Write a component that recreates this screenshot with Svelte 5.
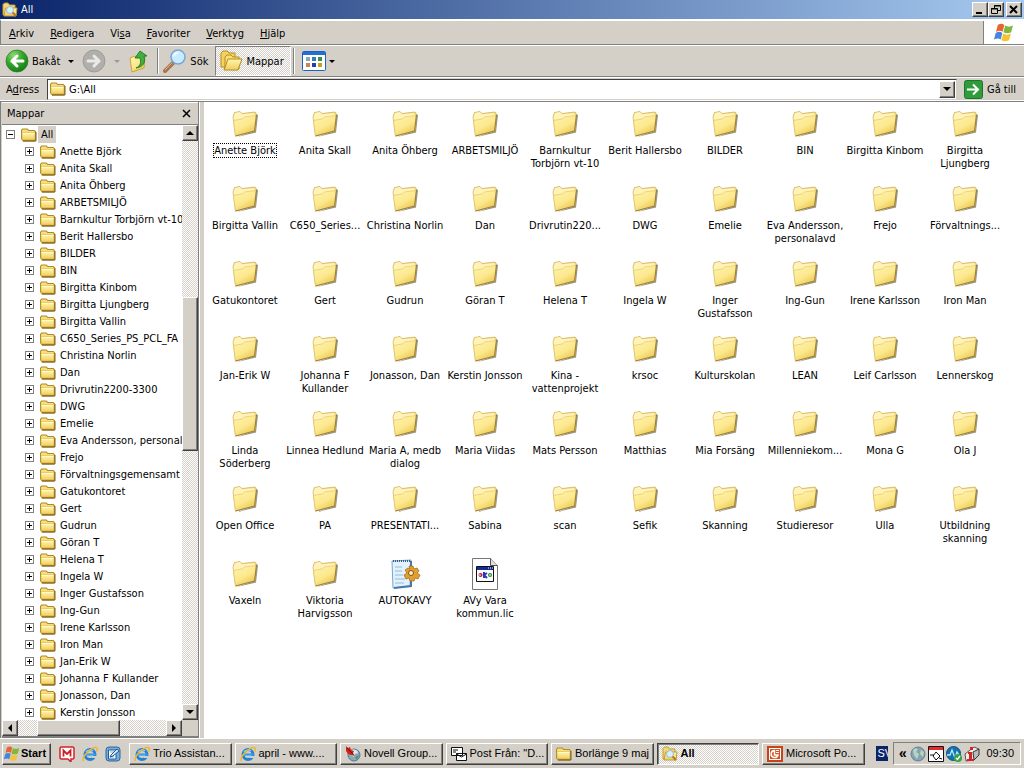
<script lang="ts">
	type Item = { label: string; kind?: string };
	type Task = { label: string; icon: string; active?: boolean };

	const menus = [
		['', 'A', 'rkiv'],
		['', 'R', 'edigera'],
		['Vi', 's', 'a'],
		['', 'F', 'avoriter'],
		['', 'V', 'erktyg'],
		['', 'H', 'jälp']
	];

	const tree = [
		'Anette Björk', 'Anita Skall', 'Anita Öhberg', 'ARBETSMILJÖ', 'Barnkultur Torbjörn vt-10',
		'Berit Hallersbo', 'BILDER', 'BIN', 'Birgitta Kinbom', 'Birgitta Ljungberg',
		'Birgitta Vallin', 'C650_Series_PS_PCL_FA', 'Christina Norlin', 'Dan', 'Drivrutin2200-3300',
		'DWG', 'Emelie', 'Eva Andersson, personalavd', 'Frejo', 'Förvaltningsgemensamt',
		'Gatukontoret', 'Gert', 'Gudrun', 'Göran T', 'Helena T', 'Ingela W', 'Inger Gustafsson',
		'Ing-Gun', 'Irene Karlsson', 'Iron Man', 'Jan-Erik W', 'Johanna F Kullander',
		'Jonasson, Dan', 'Kerstin Jonsson'
	];

	const folders = [
		'Anette Björk', 'Anita Skall', 'Anita Öhberg', 'ARBETSMILJÖ', 'Barnkultur\nTorbjörn vt-10',
		'Berit Hallersbo', 'BILDER', 'BIN', 'Birgitta Kinbom', 'Birgitta\nLjungberg',
		'Birgitta Vallin', 'C650_Series...', 'Christina Norlin', 'Dan', 'Drivrutin220...',
		'DWG', 'Emelie', 'Eva Andersson,\npersonalavd', 'Frejo', 'Förvaltnings...',
		'Gatukontoret', 'Gert', 'Gudrun', 'Göran T', 'Helena T',
		'Ingela W', 'Inger\nGustafsson', 'Ing-Gun', 'Irene Karlsson', 'Iron Man',
		'Jan-Erik W', 'Johanna F\nKullander', 'Jonasson, Dan', 'Kerstin Jonsson', 'Kina -\nvattenprojekt',
		'krsoc', 'Kulturskolan', 'LEAN', 'Leif Carlsson', 'Lennerskog',
		'Linda\nSöderberg', 'Linnea Hedlund', 'Maria A, medb\ndialog', 'Maria Viidas', 'Mats Persson',
		'Matthias', 'Mia Forsäng', 'Millenniekom...', 'Mona G', 'Ola J',
		'Open Office', 'PA', 'PRESENTATI...', 'Sabina', 'scan',
		'Sefik', 'Skanning', 'Studieresor', 'Ulla', 'Utbildning\nskanning',
		'Vaxeln', 'Viktoria\nHarvigsson'
	];

	const items: Item[] = [
		...folders.map((label) => ({ label })),
		{ label: 'AUTOKAVY', kind: 'batch' },
		{ label: 'AVy Vara\nkommun.lic', kind: 'license' }
	];

	const tasks: Task[] = [
		{ label: 'Trio Assistan...', icon: 'ie' },
		{ label: 'april - www....', icon: 'ie' },
		{ label: 'Novell Group...', icon: 'novell' },
		{ label: 'Post Från: "D...', icon: 'mail' },
		{ label: 'Borlänge 9 maj', icon: 'folder' },
		{ label: 'All', icon: 'explorer', active: true },
		{ label: 'Microsoft Po...', icon: 'powerpoint' }
	];

	let address = $state('G:\\All');
	let selected = $state(0);
</script>

{#snippet icon(name: string, size = 16)}
	<svg width={size} height={size} viewBox="0 0 16 16" aria-hidden="true">
		{#if name === 'folder'}
			<path d="M0 12V3l1.500-1.500h5L8 3h5.500L15 4.500V13l-1 1.500H2z" fill="#b08a28" />
			<path d="M1 12V3.500l1-1h4L7.500 4H13l1 1v8H2z" fill="#f8de7c" />
			<path d="M1 6h13v7H2l-1-1z" fill="url(#folderFront)" stroke="#d2a22e" stroke-width=".6" />
			<path d="M1.500 6.500h12" stroke="#fffbd0" />
			<path d="M15 5v9H2" fill="none" stroke="#7d6020" />
		{:else if name === 'explorer'}
			<path d="M1 13V2.500L2.500 1H6l1.500 2H13v10z" fill="#f4d778" stroke="#c39a35" />
			<path d="M2 14l1.500-8H15l-1 8z" fill="url(#folderFront)" stroke="#c3993a" />
			<circle cx="8" cy="8" r="3.500" fill="#d7f0fc" stroke="#9bbccd" />
			<path d="M10.500 10.500 14 14" stroke="#b87a28" stroke-width="2" />
		{:else if name === 'ie'}
			<circle cx="8" cy="8.500" r="5" fill="none" stroke="#2282d8" stroke-width="3" />
			<path d="M4 8.500h9.500" stroke="#3b9ce8" stroke-width="2.200" />
			<path d="M10 10h6v2h-6z" fill="#d4d0c8" />
			<path d="M4 6c1-2 5-3 7-1" fill="none" stroke="#8bd0fb" stroke-width="1.200" />
			<path d="M1.500 15C-1 11 11-1 15 2c1 1 0 2.500-.5 3.500" fill="none" stroke="#efb52c" stroke-width="1.500" />
		{:else if name === 'novell'}
			<circle cx="9" cy="9" r="6" fill="#87a9b8" stroke="#557788" />
			<path d="M5 5c3-3 8-1 8 2l-3 1-1 3-3-2z" fill="#d3ebf1" />
			<path d="m10 11 4-2-2 5z" fill="#5e8c67" />
			<path d="M1 0 3 2l2-1 1 3 3 1-1 2 2 3-4-1-3-1-2-3z" fill="#d32316" />
			<path d="m2 2 6 6" stroke="#731008" />
		{:else if name === 'mail'}
			<path d="M.5 1.500h11v8H.5zM5.500 7.500h10v7h-10z" fill="#fff" stroke="#111" />
			<path d="m5.500 8 5 3 5-3M2 4h5M2 6h3" fill="none" stroke="#111" />
		{:else if name === 'powerpoint'}
			<path d="M0 0h16v16H0z" fill="#c64518" />
			<path d="M2 2h12v12H2z" fill="#fff" />
			<path d="M3 3h10v10H3z" fill="#d45321" />
			<path d="M7.500 4.500A3.500 3.500 0 1 0 11 9H7.500z" fill="none" stroke="#fff" stroke-width="1.500" />
			<path d="M9 4.500h3M9 6.500h3" stroke="#fff" />
		{:else if name === 'flag'}
			<path d="M3.500 2.200c2-1.300 3.300-1 4.700 0L7 7C5.500 6 4 6 2.200 7.200z" fill="#e7632f" />
			<path d="M8.800 2.600c2 1.200 3.800 1 5.700 0L13.200 7.500c-2 1-3.700 1-5.600 0z" fill="#7fb83c" />
			<path d="M2 8c2-1.300 3.400-1 4.800 0l-1.200 4.700c-1.400-1-2.800-1-4.900 0z" fill="#4685dc" />
			<path d="M7.400 8.400c2 1.200 3.700 1 5.600 0l-1.300 4.800c-2 1-3.600 1-5.600 0z" fill="#f6c238" />
		{:else if name === 'messenger'}
			<path d="M2 1h12l1 1v10l-1 1h-2v3l-3-3H2l-1-1V2z" fill="#fff" stroke="#d52228" stroke-width="1.500" />
			<path d="M4.500 10.500v-6L8 8l3.500-3.500v6" fill="none" stroke="#c92027" stroke-width="1.800" />
		{:else if name === 'desktop'}
			<rect x="1" y="1" width="14" height="14" rx="3" fill="#72acd7" stroke="#2767a5" />
			<path d="M3.500 4h7.500v9H3.500z" fill="#fff" stroke="#225c99" />
			<path d="M5 6h4M5 11h4" stroke="#7eabd0" />
			<path d="m6 9 6-6 2 2-6 5-3 1z" fill="#d4ecf8" stroke="#21578c" />
		{:else if name === 'globe'}
			<circle cx="8" cy="8" r="7" fill="#85a3b5" stroke="#637f90" />
			<path d="M3 4c4-4 6 0 3 2l3 2-2 5-3-4zM11 4l3 2-1 5-3-3z" fill="#b9d6bd" />
		{:else if name === 'calendar'}
			<path d="M.5.500h15v15H.5z" fill="#fff" stroke="#111" />
			<path d="M1 1h14v3H1z" fill="#e72b2b" />
			<path d="m8 6 4 4-4 4-3-4zM2 9h4M11 12l3 1" fill="none" stroke="#111" />
		{:else if name === 'monitor'}
			<circle cx="7.500" cy="7.500" r="7" fill="#1473af" stroke="#115184" />
			<path d="M1 9h3l2-5 3 8 2-6 2 3" fill="none" stroke="#bcecfc" stroke-width="1.300" />
			<circle cx="12" cy="12" r="4" fill="#36a346" />
			<path d="m10 12 1.500 1.500L14 10" fill="none" stroke="#fff" stroke-width="1.300" />
		{:else if name === 'info'}
			<path d="m1 8 9-7 5 2-5 11-8 1z" fill="#eee" stroke="#555" />
			<path d="m9 6 6-3v6l-5 5z" fill="#bbb" stroke="#333" />
			<path d="M6 1h3v3H6zM4 6h4v7h2v2H3v-2h2V8H4z" fill="#d52424" />
		{/if}
	</svg>
{/snippet}

{#snippet bigIcon(kind = 'folder')}
	<svg width="32" height="32" viewBox="0 0 32 32" aria-hidden="true">
		{#if kind === 'folder'}
			<path d="M8 29 27 24.500 29 7l-2-1-2 17z" fill="#4f4a38" opacity=".6" />
			<path d="M4 9 5.500 4.500 11 3.500l2 2L26 4l1.500 2L26 23 6.500 28z" fill="#f0d47a" stroke="#cdae52" stroke-width=".7" />
			<path d="M4.500 9 6 5l4.800-1L13 6.300 25.500 5l.5 4L5 12.500z" fill="#fff3bb" />
			<path d="m4.500 12.500 9-1.700 2-1.800L27 7.500 25.500 23 6.500 28z" fill="url(#folderLarge)" stroke="#e3c05c" stroke-width=".6" />
			<path d="m6.500 28 19-5 2-16" fill="none" stroke="#8d7636" stroke-width=".9" />
		{:else if kind === 'batch'}
			<path d="m3 3 19-1-1 26-17 2z" fill="#e3f1fc" stroke="#7ba5cc" />
			<path d="M22 3v25L5 30" fill="none" stroke="#4578ad" stroke-width="2" />
			<path d="M4 3h17" stroke="#375e82" stroke-width="2" stroke-dasharray="1 1" />
			<path d="M6 9h7M6 13h7M6 17h8M6 21h10M6 25h9" stroke="#8dbbdc" />
			<path d="M20 8h4l1 3 3-1 2 3-2 2 3 2-2 4-3-1-1 3h-4l-1-3-3 1-2-4 3-2-2-3 3-2 2 1z" fill="#e1a02d" stroke="#9c6418" stroke-width=".7" />
			<circle cx="22" cy="15" r="2.500" fill="#fff0bd" stroke="#815019" />
		{:else}
			<path d="M3.500.500h18l7 7v24h-25z" fill="#fff" stroke="#777" />
			<path d="M21.500.500v7h7" fill="#ddd" stroke="#555" />
			<path d="M7.500 8.500h17v15h-17z" fill="#fff" stroke="#111" />
			<path d="M8 9h16v3H8z" fill="#162b97" />
			<path d="M19 10h1M21 10h1M23 10h1" stroke="#fff" />
			<circle cx="11.500" cy="17" r="2" fill="#bd1835" />
			<path d="M15 14v6m3-5-3 2 3 3" fill="none" stroke="#263bb3" stroke-width="2" />
			<circle cx="21" cy="17" r="2" fill="#248141" />
			<path d="M11 16v2M21 16v2" stroke="#fff" />
		{/if}
	</svg>
{/snippet}

<svg class="defs" width="0" height="0" aria-hidden="true">
	<defs>
		<linearGradient id="folderFront" x2="0" y2="1">
			<stop stop-color="#fff6ac" />
			<stop offset="1" stop-color="#f0cc5f" />
		</linearGradient>
		<linearGradient id="folderLarge" x2=".6" y2="1">
			<stop stop-color="#fff5ab" />
			<stop offset=".6" stop-color="#fce88e" />
			<stop offset="1" stop-color="#edc750" />
		</linearGradient>
		<radialGradient id="greenBall" cx=".35" cy=".25" r=".8">
			<stop stop-color="#8edb75" />
			<stop offset=".5" stop-color="#36a52c" />
			<stop offset="1" stop-color="#147a19" />
		</radialGradient>
	</defs>
</svg>

<div class="desktop">
	<header class="titlebar">
		{@render icon('explorer')}
		<h1>All</h1>
		<div class="window-buttons">
			<button aria-label="Minimera"><svg width="10" height="9"><path d="M1 7h6v2H1z" /></svg></button>
			<button aria-label="Återställ">
				<svg width="10" height="9"><path d="M3.500 3V.5h6v5H7M3 1h7M.5 3.500h6v5h-6zM0 4h7" fill="none" stroke="#000" /></svg>
			</button>
			<button class="close" aria-label="Stäng">
				<svg width="10" height="9"><path d="m1 1 7 7m0-7L1 8" stroke="#000" stroke-width="2" /></svg>
			</button>
		</div>
	</header>

	<div class="menubar">
		<nav>
			{#each menus as [before, key, after]}
				<button>{before}<u>{key}</u>{after}</button>
			{/each}
		</nav>
		<div class="brand">{@render icon('flag', 22)}</div>
	</div>

	<div class="toolbar">
		<button class="tool">
			<svg width="24" height="24" viewBox="0 0 24 24" aria-hidden="true">
				<circle cx="12" cy="12" r="11" fill="url(#greenBall)" stroke="#238023" stroke-width=".7" />
				<path d="M18 12H7m5-5-5 5 5 5" fill="none" stroke="#fff" stroke-width="3" stroke-linecap="round" />
			</svg>
			Bakåt
		</button>
		<button class="drop" aria-label="Bakåt, lista"><i class="down"></i></button>
		<button class="tool" aria-label="Framåt" disabled>
			<svg width="24" height="24" viewBox="0 0 24 24" aria-hidden="true">
				<circle cx="12" cy="12" r="11" fill="#b0afab" stroke="#908f8c" stroke-width=".7" />
				<path d="M6 12h11m-5-5 5 5-5 5" fill="none" stroke="#ebe9e5" stroke-width="3" stroke-linecap="round" />
			</svg>
		</button>
		<button class="drop" aria-label="Framåt, lista" disabled><i class="down"></i></button>
		<button class="tool" aria-label="Upp">
			<svg width="22" height="24" viewBox="0 0 22 24" aria-hidden="true">
				<path d="m2 9 5-2 2 2 8-2-1 12-12 4z" fill="url(#folderLarge)" stroke="#c9a440" />
				<path d="M8 19c5-2 5-6 4-10H7l5-7 7 5h-3c2 7-1 11-8 12z" fill="#43ad40" stroke="#137321" stroke-width=".8" />
			</svg>
		</button>
		<span class="separator"></span>
		<button class="tool search">
			<svg width="24" height="24" viewBox="0 0 24 24" aria-hidden="true">
				<path d="m10 14-8 8" stroke="#a87550" stroke-width="4" stroke-linecap="round" />
				<path d="m9 14-7 7" stroke="#e1b287" />
				<circle cx="15" cy="8" r="7" fill="#c7ebff" stroke="#7ba6d2" stroke-width="1.500" />
				<path d="M10 8c0-4 4-6 7-4-3 0-5 2-7 4z" fill="#fff" />
			</svg>
			Sök
		</button>
		<button class="tool pressed" aria-pressed="true">
			<svg width="24" height="24" viewBox="0 0 24 24" aria-hidden="true">
				<path d="M1 18V4l2-2h4l2 2h6v14z" fill="#f4d15d" stroke="#b48b20" />
				<path d="M5 20V8l2-2h4l2 2h6v12z" fill="#f8de77" stroke="#b48b20" />
				<path d="m4 21 4-11h14l-4 11z" fill="url(#folderFront)" stroke="#b48b20" />
			</svg>
			Mappar
		</button>
		<span class="separator"></span>
		<button class="tool views" aria-label="Vyer">
			<svg width="24" height="20" viewBox="0 0 24 20" aria-hidden="true">
				<rect x=".5" y=".5" width="23" height="19" rx="1" fill="#fff" stroke="#1e62bd" />
				<path d="M1 1h22v3H1z" fill="#2370d5" />
				<path d="M4 6h4v4H4z" fill="#88a6cd" /><path d="M10 6h4v4h-4z" fill="#357cbd" /><path d="M16 6h4v4h-4z" fill="#35913f" />
				<path d="M4 12h4v4H4z" fill="#d28155" /><path d="M10 12h4v4h-4z" fill="#263daa" /><path d="M16 12h4v4h-4z" fill="#c1a126" />
			</svg>
			<i class="down"></i>
		</button>
	</div>

	<div class="addressbar">
		<label for="address">A<u>d</u>ress</label>
		<div class="field">
			{@render icon('folder')}
			<input id="address" type="text" bind:value={address} />
			<button class="scroll-button" aria-label="Visa adresser"><i class="down big"></i></button>
		</div>
		<button class="go">
			<svg width="19" height="19" viewBox="0 0 19 19" aria-hidden="true">
				<rect x=".5" y=".5" width="18" height="18" rx="2" fill="#2f9c3b" stroke="#1c742a" />
				<path d="M3 9.500h11m-5-5 5 5-5 5" fill="none" stroke="#fff" stroke-width="2" />
			</svg>
			Gå till
		</button>
	</div>

	<main>
		<aside>
			<div class="panel-title">
				<h2>Mappar</h2>
				<button aria-label="Stäng mappar"><svg width="9" height="9"><path d="m1 1 7 7m0-7L1 8" stroke="#000" stroke-width="1.500" /></svg></button>
			</div>
			<div class="tree-area">
				<div class="tree">
					<div class="node root">
						<button class="toggle" aria-label="Dölj All"></button>
						{@render icon('folder')}
						<span class="current">All</span>
					</div>
					{#each tree as name}
						<div class="node">
							<button class="toggle plus" aria-label="Visa {name}"></button>
							{@render icon('folder')}
							<span>{name}</span>
						</div>
					{/each}
				</div>
				<div class="scrollbar vertical">
					<button class="scroll-button" aria-label="Uppåt"><i class="arrow-up"></i></button>
					<span class="before"></span>
					<span class="thumb"></span>
					<span class="after"></span>
					<button class="scroll-button" aria-label="Nedåt"><i class="down big"></i></button>
				</div>
			</div>
			<div class="bottom-scroll">
				<div class="scrollbar horizontal">
					<button class="scroll-button" aria-label="Vänster"><i class="arrow-left"></i></button>
					<span class="before"></span>
					<span class="thumb"></span>
					<span class="after"></span>
					<button class="scroll-button" aria-label="Höger"><i class="arrow-right"></i></button>
				</div>
			</div>
		</aside>
		<div class="splitter"></div>

		<section class="files">
			{#each items as item, i}
				<button class="file" class:focused={i === selected} onclick={() => (selected = i)}>
					{@render bigIcon(item.kind)}
					<span>{item.label}</span>
				</button>
			{/each}
		</section>
	</main>

	<footer>
		<button class="start">{@render icon('flag', 18)}Start</button>
		<div class="quick">
			<button aria-label="Messenger">{@render icon('messenger')}</button>
			<button aria-label="Internet Explorer">{@render icon('ie')}</button>
			<button aria-label="Visa skrivbordet">{@render icon('desktop')}</button>
		</div>
		<div class="tasks">
			{#each tasks as task}
				<button class:active={task.active}>
					{@render icon(task.icon)}
					<span>{task.label}</span>
				</button>
			{/each}
		</div>
		<span class="language">SV</span>
		<div class="tray">
			<button class="more" aria-label="Visa dolda ikoner">«</button>
			{@render icon('globe')}
			{@render icon('calendar')}
			{@render icon('monitor')}
			{@render icon('info')}
			<time>09:30</time>
		</div>
	</footer>
</div>

<style>
	:global(body) {
		margin: 0;
	}
	.desktop {
		--face: #d4d0c8;
		--shadow: #808080;
		--dither: conic-gradient(#fff 25%, #d4d0c8 0 50%, #fff 0 75%, #d4d0c8 0) 0 0 / 2px 2px;
		display: flex;
		flex-direction: column;
		height: 100vh;
		overflow: hidden;
		background: var(--face);
		color: #000;
		font: 11px/13px 'DejaVu Sans Condensed', 'DejaVu Sans', sans-serif;
	}
	.desktop *,
	.desktop {
		box-sizing: border-box;
	}
	.defs {
		position: absolute;
	}
	button,
	input {
		margin: 0;
		padding: 0;
		border: 0;
		background: none;
		color: inherit;
		font: inherit;
	}
	svg {
		display: block;
		flex-shrink: 0;
	}
	h1,
	h2 {
		margin: 0;
		font: inherit;
	}
	.titlebar {
		display: flex;
		align-items: center;
		flex-shrink: 0;
		gap: 3px;
		height: 19px;
		padding: 0 2px;
		background: linear-gradient(90deg, #0a246a, #a6caf0);
		color: #fff;
	}
	.window-buttons {
		display: flex;
		margin-left: auto;
	}
	.window-buttons button,
	.scroll-button {
		display: flex;
		align-items: center;
		justify-content: center;
		flex-shrink: 0;
		width: 16px;
		height: 15px;
		border: 1px solid;
		border-color: #fff #404040 #404040 #fff;
		background: var(--face);
		box-shadow: inset -1px -1px var(--shadow);
	}
	.window-buttons .close {
		margin-left: 2px;
	}
	.menubar {
		display: flex;
		flex-shrink: 0;
		height: 26px;
		border-top: 2px solid #fff;
		border-bottom: 1px solid var(--shadow);
		border-left: 1px solid var(--shadow);
	}
	nav {
		display: flex;
		flex: 1;
	}
	nav button {
		padding: 2px 8px 0;
	}
	.brand {
		display: flex;
		align-items: center;
		justify-content: center;
		width: 41px;
		border-left: 1px solid var(--shadow);
		background: #fff;
	}
	.toolbar {
		display: flex;
		align-items: center;
		flex-shrink: 0;
		height: 32px;
		padding-left: 5px;
		border-top: 1px solid #fff;
		border-bottom: 1px solid var(--shadow);
	}
	.tool {
		display: flex;
		align-items: center;
		gap: 3px;
	}
	.drop {
		display: flex;
		align-items: center;
		justify-content: center;
		width: 22px;
		height: 24px;
	}
	.drop:disabled {
		color: #999;
	}
	.search {
		margin: 0 7px 0 4px;
	}
	.separator {
		width: 2px;
		height: 26px;
		margin-left: 7px;
		border-left: 1px solid var(--shadow);
		border-right: 1px solid #fff;
	}
	.pressed {
		height: 30px;
		padding: 0 6px 0 4px;
		gap: 2px;
		border: 1px solid;
		border-color: var(--shadow) #fff #fff var(--shadow);
		background: var(--dither);
	}
	.pressed + .separator {
		margin-left: 2px;
	}
	.views {
		margin-left: 7px;
	}
	.down {
		border: 3px solid transparent;
		border-top-color: currentColor;
		border-bottom: 0;
	}
	.big {
		border-width: 4px 4px 0;
	}
	.addressbar {
		display: flex;
		align-items: center;
		flex-shrink: 0;
		height: 24px;
		padding-left: 6px;
		border-top: 1px solid #fff;
		border-bottom: 1px solid #fff;
	}
	.field {
		display: flex;
		align-items: center;
		flex: 1;
		height: 21px;
		margin: 0 7px 0 8px;
		padding: 0 1px 0 2px;
		border: 1px solid;
		border-color: #404040 var(--face) var(--face) #404040;
		background: #fff;
	}
	.field input {
		flex: 1;
		min-width: 0;
		padding-left: 3px;
		outline: none;
	}
	.field .scroll-button {
		height: 17px;
	}
	.go {
		display: flex;
		align-items: center;
		gap: 4px;
		padding-right: 8px;
	}
	main {
		display: flex;
		flex: 1;
		min-height: 0;
		border-top: 1px solid var(--shadow);
	}
	aside {
		display: flex;
		flex-direction: column;
		flex-shrink: 0;
		width: 199px;
		padding-left: 1px;
		border-left: 1px solid var(--shadow);
		border-right: 1px solid var(--shadow);
	}
	.splitter {
		flex-shrink: 0;
		width: 5px;
		border-left: 1px solid #fff;
	}
	.panel-title {
		display: flex;
		align-items: center;
		justify-content: space-between;
		height: 23px;
		padding: 0 7px 0 5px;
		border-top: 1px solid #fff;
		border-bottom: 1px solid var(--shadow);
	}
	.tree-area {
		display: flex;
		flex: 1;
		min-height: 0;
		background: #fff;
	}
	.tree {
		flex: 1;
		min-width: 0;
		padding-top: 1px;
		overflow: hidden;
	}
	.node {
		display: flex;
		align-items: center;
		height: 17px;
		padding-left: 23px;
		white-space: nowrap;
	}
	.root {
		padding-left: 4px;
	}
	.node span {
		padding: 1px 4px;
	}
	.node .current {
		margin-left: 1px;
		padding: 2px 3px;
		background: var(--face);
	}
	.toggle {
		flex-shrink: 0;
		width: 9px;
		height: 9px;
		margin-right: 6px;
		border: 1px solid var(--shadow);
		background: linear-gradient(#000, #000) center / 5px 1px no-repeat;
	}
	.plus {
		background:
			linear-gradient(#000, #000) center / 5px 1px no-repeat,
			linear-gradient(#000, #000) center / 1px 5px no-repeat;
	}
	.scrollbar {
		display: flex;
		background: var(--dither);
	}
	.scrollbar .scroll-button {
		width: 16px;
		height: 16px;
	}
	.vertical {
		flex-direction: column;
		width: 16px;
	}
	.thumb {
		border: 1px solid;
		border-color: #fff #404040 #404040 #fff;
		background: var(--face);
		box-shadow: inset -1px -1px var(--shadow);
	}
	.vertical .before {
		flex: 157;
	}
	.vertical .thumb {
		flex: 152;
	}
	.vertical .after {
		flex: 254;
	}
	.bottom-scroll {
		display: flex;
		padding-right: 16px;
		border-bottom: 2px solid var(--shadow);
	}
	.horizontal {
		flex: 1;
	}
	.horizontal .before {
		flex: 19;
	}
	.horizontal .thumb {
		flex: 82;
	}
	.horizontal .after {
		flex: 47;
	}
	.arrow-up,
	.arrow-left,
	.arrow-right {
		border: 4px solid transparent;
	}
	.arrow-up {
		border-top: 0;
		border-bottom-color: #000;
	}
	.arrow-left {
		border-left: 0;
		border-right-color: #000;
	}
	.arrow-right {
		border-right: 0;
		border-left-color: #000;
	}
	.files {
		display: grid;
		flex: 1;
		grid-template-columns: repeat(auto-fill, 80px);
		grid-auto-rows: 75px;
		align-content: start;
		padding: 6px 0 0 1px;
		overflow: hidden;
		background: #fff;
	}
	.file {
		display: flex;
		flex-direction: column;
		align-items: center;
		gap: 3px;
		outline: none;
	}
	.file span {
		border: 1px solid transparent;
		white-space: pre;
	}
	.focused span {
		border: 1px dotted #000;
	}
	footer {
		display: flex;
		align-items: center;
		flex-shrink: 0;
		height: 30px;
		padding: 0 3px 0 2px;
		border-top: 1px solid #fff;
		font-family: 'Liberation Sans', Arial, sans-serif;
	}
	.start,
	.tasks button {
		display: flex;
		align-items: center;
		height: 22px;
		border: 1px solid;
		border-color: #fff #404040 #404040 #fff;
		box-shadow: inset -1px -1px var(--shadow);
	}
	.start {
		width: 49px;
		font-weight: bold;
	}
	.quick {
		display: flex;
		gap: 7px;
		margin: 0 8px;
	}
	.tasks {
		display: flex;
		flex: 1;
		gap: 3px;
		min-width: 0;
	}
	.tasks button {
		flex: 1;
		gap: 3px;
		min-width: 0;
		padding-left: 4px;
		white-space: nowrap;
	}
	.tasks .active {
		border-color: #404040 #fff #fff #404040;
		background: var(--dither);
		box-shadow: inset 1px 1px var(--shadow);
		font-weight: bold;
	}
	.language {
		width: 12px;
		margin: 0 5px 0 12px;
		padding: 1px 0 1px 1px;
		overflow: hidden;
		background: #0a246a;
		color: #fff;
	}
	.tray {
		display: flex;
		align-items: center;
		gap: 2px;
		height: 23px;
		padding: 0 6px 0 3px;
		border: 1px solid;
		border-color: var(--shadow) #fff #fff var(--shadow);
	}
	.more {
		width: 11px;
		font-size: 14px;
		font-weight: bold;
	}
	.tray time {
		margin-left: 4px;
	}
</style>
